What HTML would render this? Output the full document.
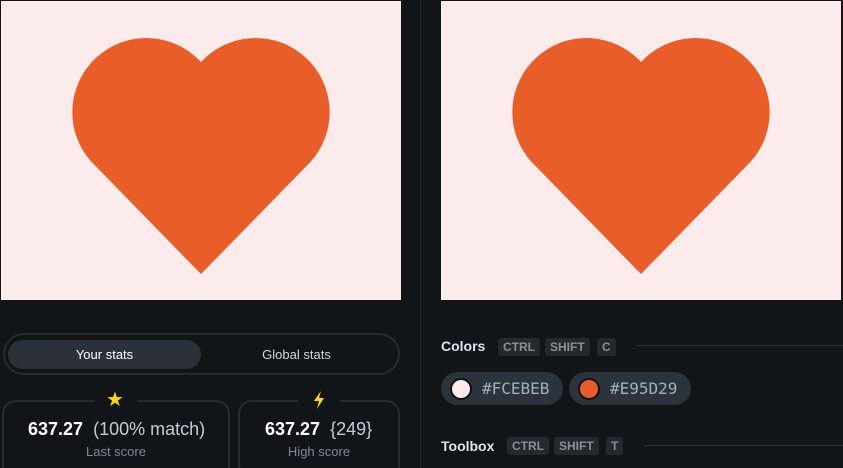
<!DOCTYPE html>
<html><head><style>
*{margin:0;padding:0;box-sizing:border-box}
html,body{width:843px;height:468px;overflow:hidden}
body{background:#121518;font-family:"Liberation Sans",sans-serif;position:relative;color:#fff}
.abs{position:absolute}
.canvas{position:absolute;top:1px;width:400px;height:299px;background:#fcebeb}
.kbd{position:absolute;height:18px;background:#24292e;color:#8a9096;font-size:12px;font-weight:bold;line-height:18px;padding:0 5px;border-radius:3px}
.pill{position:absolute;height:33px;top:372px;background:#2b343d;border-radius:17px}
.dot{position:absolute;left:9px;top:6px;width:22px;height:22px;border-radius:50%;border:2px solid #111}
.hex{position:absolute;left:41px;top:7px;font-family:"DejaVu Sans Mono","Liberation Mono",monospace;font-size:16px;color:#9fb0c0}
.card{position:absolute;top:400px;height:80px;border:2px solid #262c33;border-radius:14px}
.val{position:absolute;top:419px;font-size:18px;white-space:nowrap}
.lbl{position:absolute;top:444px;font-size:13px;color:#7d8892;width:100%;text-align:center}
</style></head><body>
<div class="canvas" style="left:1px"><svg width="400" height="299"><path d="M201,273 L91.9,161.3 A73.1,73.1 0 1 1 201,61 A73.1,73.1 0 1 1 310.1,161.3 Z" fill="#e95d29" transform="translate(-1,0)"/></svg></div>
<div class="canvas" style="left:441px"><svg width="400" height="299"><path d="M201,273 L91.9,161.3 A73.1,73.1 0 1 1 201,61 A73.1,73.1 0 1 1 310.1,161.3 Z" fill="#e95d29" transform="translate(-1,0)"/></svg></div>
<div class="abs" style="left:420px;top:0;width:1px;height:468px;background:#22272c"></div>

<div class="abs" style="left:3px;top:333px;width:397px;height:42px;border:2px solid #262c33;border-radius:21px"></div>
<div class="abs" style="left:8px;top:340px;width:193px;height:29px;background:#2a3138;border-radius:15px;text-align:center;line-height:29px;font-size:13px">Your stats</div>
<div class="abs" style="left:200px;top:340px;width:193px;line-height:29px;text-align:center;font-size:13px;color:#d0d6dc">Global stats</div>

<div class="card" style="left:2px;width:228px"></div>
<div class="abs" style="left:95px;top:394px;width:42px;height:12px;background:#121518"></div>
<div class="abs" style="left:106px;top:387px;font-size:20px;color:#f5d90a">★</div>
<div class="val" style="left:28px"><b>637.27</b> <span style="color:#c5ccd3">&nbsp;(100% match)</span></div>
<div class="abs" style="left:2px;width:228px;top:0"><div class="lbl">Last score</div></div>

<div class="card" style="left:238px;width:162px"></div>
<div class="abs" style="left:298px;top:394px;width:42px;height:12px;background:#121518"></div>
<svg class="abs" style="left:312px;top:391px" width="14" height="18"><path d="M9,0 L2,10 H7 L5,18 L12,7 H7 Z" fill="#f5d90a"/></svg>
<div class="val" style="left:265px"><b>637.27</b> <span style="color:#c5ccd3">&nbsp;{249}</span></div>
<div class="abs" style="left:238px;width:162px;top:0"><div class="lbl">High score</div></div>

<div class="abs" style="left:441px;top:338px;font-size:14px;font-weight:bold;color:#dde3ea">Colors</div>
<div class="kbd" style="left:498px;top:338px">CTRL</div>
<div class="kbd" style="left:545px;top:338px">SHIFT</div>
<div class="kbd" style="left:597px;top:338px">C</div>
<div class="abs" style="left:636px;top:345px;width:207px;height:1px;background:#2a3037"></div>

<div class="pill" style="left:441px;width:122px"><div class="dot" style="background:#fcebeb"></div><div class="hex">#FCEBEB</div></div>
<div class="pill" style="left:569px;width:122px"><div class="dot" style="background:#e95d29"></div><div class="hex">#E95D29</div></div>

<div class="abs" style="left:441px;top:438px;font-size:14px;font-weight:bold;color:#dde3ea">Toolbox</div>
<div class="kbd" style="left:507px;top:437px">CTRL</div>
<div class="kbd" style="left:554px;top:437px">SHIFT</div>
<div class="kbd" style="left:606px;top:437px">T</div>
<div class="abs" style="left:644px;top:445px;width:199px;height:1px;background:#2a3037"></div>
</body></html>
